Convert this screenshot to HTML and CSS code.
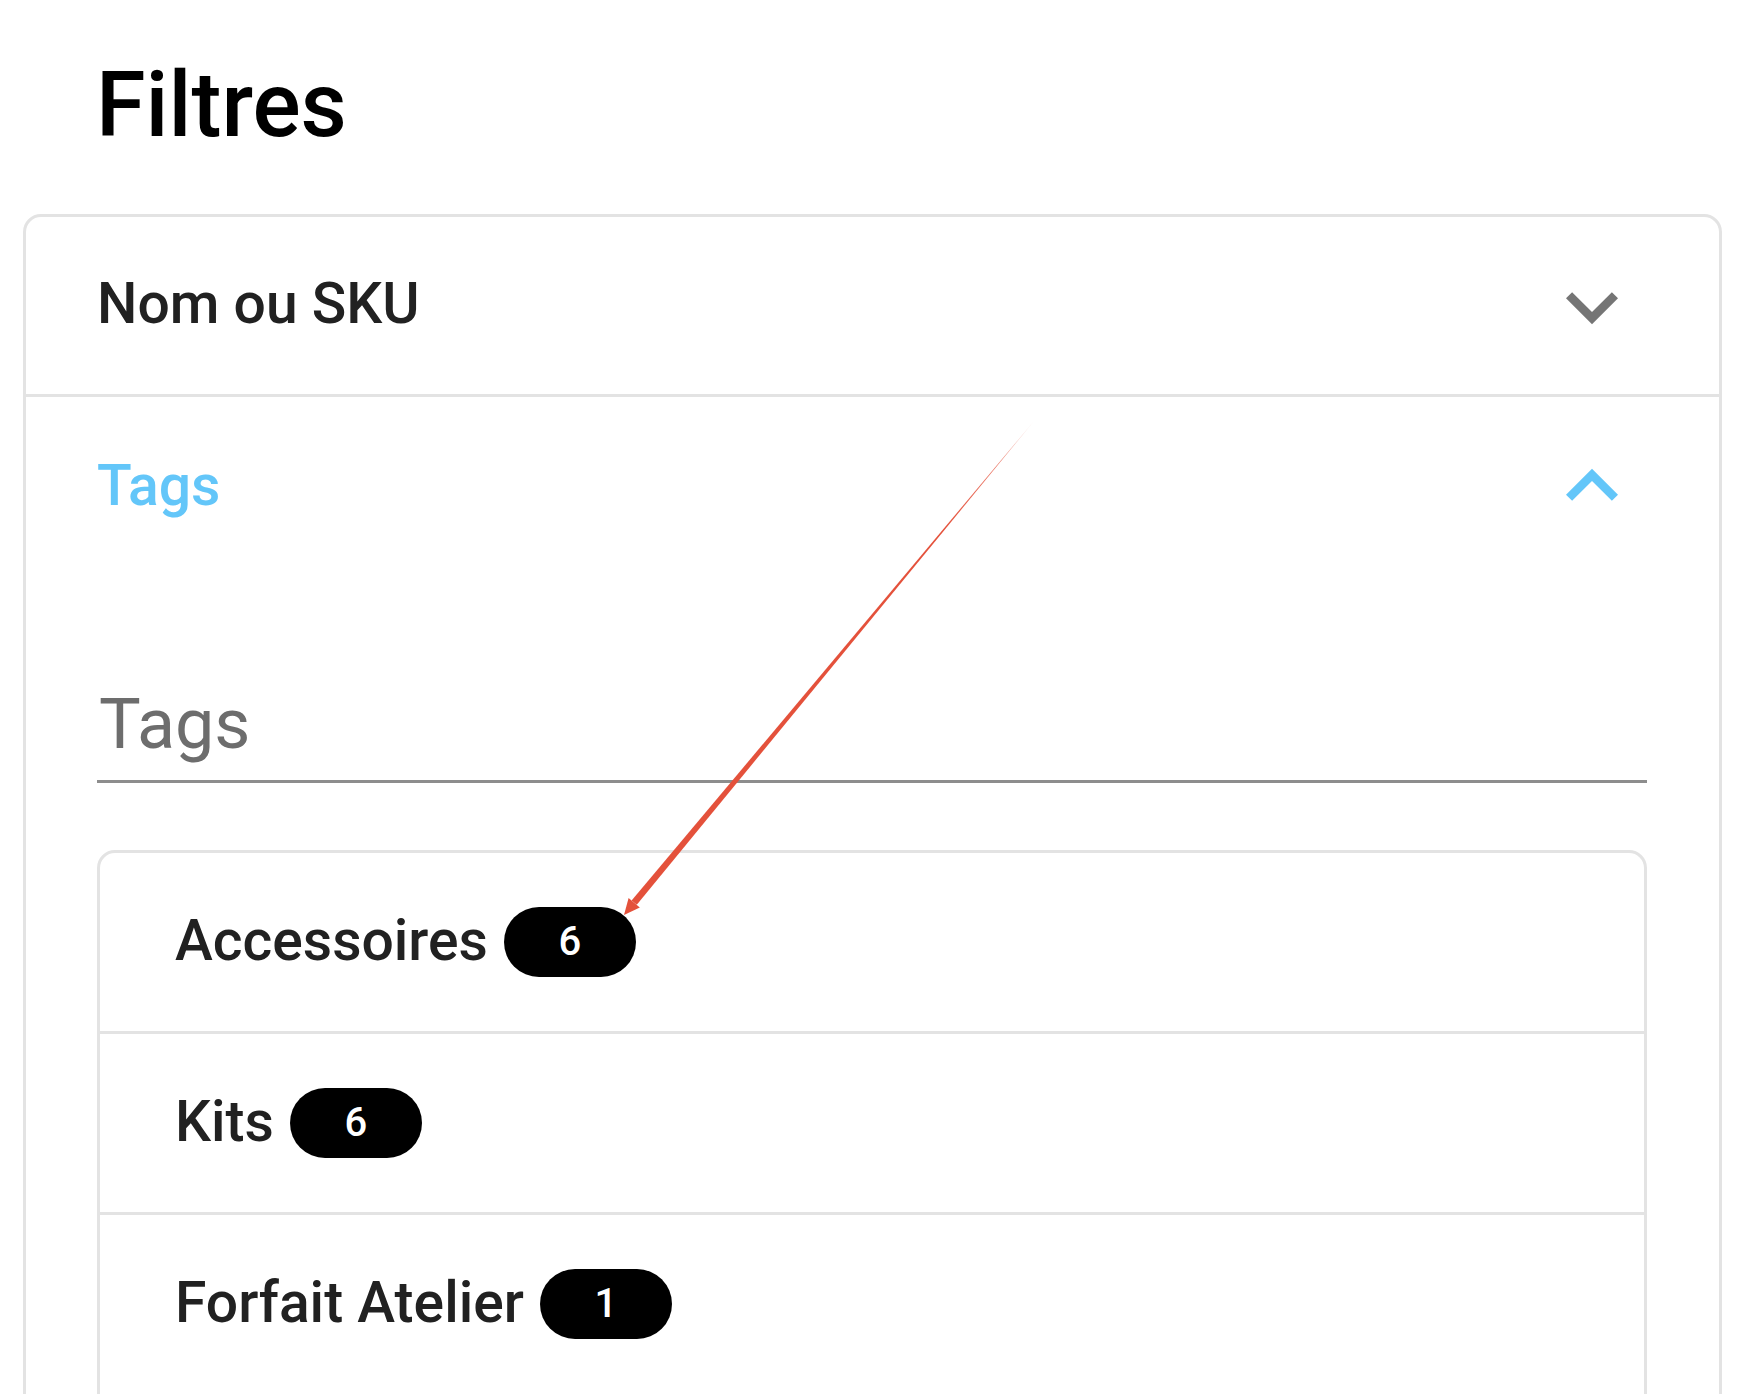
FILE: index.html
```html
<!DOCTYPE html>
<html lang="fr">
<head>
<meta charset="utf-8">
<title>Filtres</title>
<link rel="stylesheet" href="styles.css">
</head>
<body>
<div class="page">
  <h1 class="title">Filtres</h1>
  <div class="card">
    <div class="section">
      <div class="section-header">
        <span class="section-label">Nom ou SKU</span>
        <svg class="chev chev-down" viewBox="0 0 24 24" aria-hidden="true"><path d="M16.59 8.59L12 13.17 7.41 8.59 6 10l6 6 6-6z"/></svg>
      </div>
    </div>
    <div class="section open">
      <div class="section-header">
        <span class="section-label active">Tags</span>
        <svg class="chev chev-up" viewBox="0 0 24 24" aria-hidden="true"><path d="M12 8l-6 6 1.41 1.41L12 10.83l4.59 4.58L18 14z"/></svg>
      </div>
      <div class="section-body">
        <div class="field"><span class="field-label">Tags</span></div>
        <ul class="tag-list">
          <li class="tag-row"><span class="tag-name">Accessoires</span><span class="badge">6</span></li>
          <li class="tag-row"><span class="tag-name">Kits</span><span class="badge">6</span></li>
          <li class="tag-row"><span class="tag-name">Forfait Atelier</span><span class="badge">1</span></li>
        </ul>
      </div>
    </div>
  </div>
  <svg class="annotation" viewBox="0 0 1740 1394" aria-hidden="true">
    <defs>
      <linearGradient id="fade" gradientUnits="userSpaceOnUse" x1="1034" y1="421" x2="626" y2="912">
        <stop offset="0" stop-color="#e4513b" stop-opacity="0.15"/>
        <stop offset="0.08" stop-color="#e4513b" stop-opacity="0.75"/>
        <stop offset="0.22" stop-color="#e4513b" stop-opacity="1"/>
      </linearGradient>
    </defs>
    <polygon points="1034,421 636.8,904.8 631.6,900.6" fill="url(#fade)"/>
    <polygon points="624,915 639.8,907.4 628.6,898.0" fill="#e4513b"/>
  </svg>
</div>
</body>
</html>
```

FILE: styles.css
```css
* {
  box-sizing: border-box;
}

html, body {
  margin: 0;
  padding: 0;
  background: #ffffff;
}

body {
  font-family: Roboto, "Liberation Sans", Arial, sans-serif;
  color: #212121;
  overflow: hidden;
}

.page {
  position: relative;
  width: 1740px;
  height: 1394px;
  overflow: hidden;
}

.title {
  margin: 0;
  padding: 61px 0 0 96px;
  height: 151px;
  font-size: 90px;
  line-height: 90px;
  font-weight: 500;
  color: #000;
}

.card {
  margin: 63px 0 0 23px;
  width: 1699px;
  border: 3px solid #e3e3e3;
  border-radius: 18px;
  padding-bottom: 60px;
}

.section + .section {
  border-top: 3px solid #e3e3e3;
}

.section-header {
  height: 177px;
  display: flex;
  align-items: center;
  justify-content: space-between;
  padding: 0 75px 0 71px;
}

.section-label {
  font-size: 57px;
  line-height: 57px;
  font-weight: 500;
  color: #212121;
  margin-top: -4px;
}

.section-label.active {
  color: #63c6f9;
  margin-top: 0;
}

.chev {
  width: 104px;
  height: 104px;
  flex: none;
}

.chev-down {
  fill: #757575;
  margin-top: 2px;
}

.chev-up {
  fill: #63c6f9;
}

.section-body {
  padding: 110px 72px 0 71px;
}

.field {
  border-bottom: 3px solid #8d8d8d;
  padding: 0 0 16px 2px;
}

.field-label {
  display: block;
  font-size: 70px;
  line-height: 80px;
  color: #6d6d6d;
}

.tag-list {
  list-style: none;
  margin: 67px 0 0 0;
  padding: 0 0 60px 0;
  border: 3px solid #e3e3e3;
  border-radius: 18px;
}

.tag-row {
  height: 178px;
  display: flex;
  align-items: center;
  padding-left: 75px;
}

.tag-row + .tag-row {
  border-top: 3px solid #e3e3e3;
  height: 181px;
}

.tag-name {
  font-size: 57px;
  line-height: 57px;
  font-weight: 500;
  color: #212121;
  margin-top: -4px;
}

.badge {
  margin-left: 16px;
  width: 132px;
  height: 70px;
  border-radius: 35px;
  background: #000;
  color: #fff;
  display: inline-flex;
  align-items: center;
  justify-content: center;
  font-family: Roboto, "Noto Sans", sans-serif;
  font-weight: 500;
  font-size: 40px;
  line-height: 1;
}

.annotation {
  position: absolute;
  left: 0;
  top: 0;
  width: 1740px;
  height: 1394px;
  pointer-events: none;
}
```
